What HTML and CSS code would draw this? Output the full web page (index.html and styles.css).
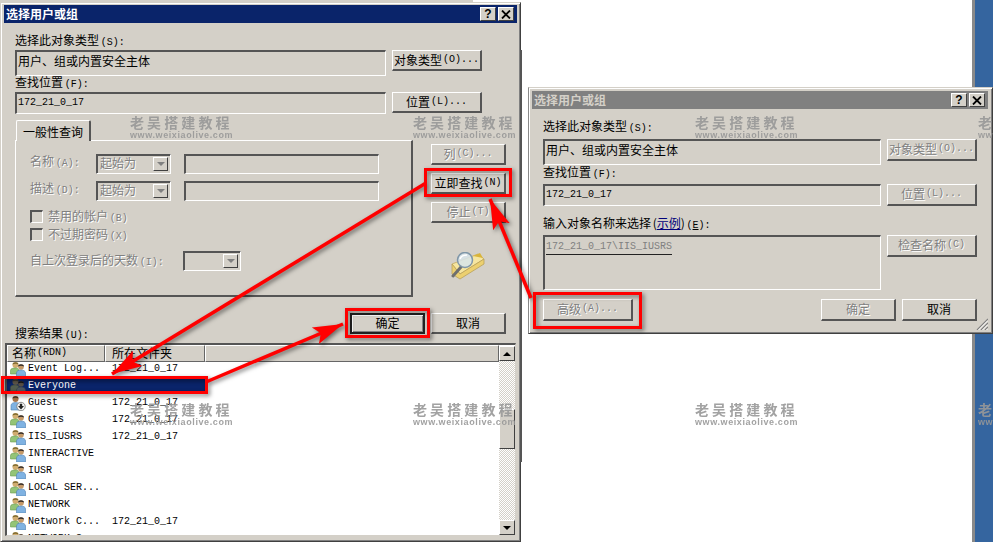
FILE: index.html
```html
<!DOCTYPE html>
<html lang="zh-CN">
<head>
  <meta charset="utf-8">
  <title>选择用户或组</title>
  <link rel="stylesheet" href="styles.css">
</head>
<body>

<svg class="defs" width="0" height="0">
  <symbol id="ico-group" viewBox="0 0 16 16">
    <circle cx="5.500" cy="4" r="3" fill="#d2ad70"/>
    <path d="M2.500 3.500C2.500 .5 8.500 .5 8.500 3.500 6.500 2.500 4.500 2.500 2.500 3.500Z" fill="#7d6a30"/>
    <path d="M0.500 13V9.500C0.500 7.500 3 7 5.500 7S9 8 9 10V13Z" fill="#93c477" stroke="#6a9a50" stroke-width=".6"/>
    <circle cx="11" cy="6" r="2.800" fill="#c69a68"/>
    <path d="M8 5.500C8 2.500 14 2.500 14 5.500 12 4.500 10 4.500 8 5.500Z" fill="#2f2a28"/>
    <path d="M6.500 16V12C6.500 10 8.500 9 11 9S15.500 10 15.500 12V16Z" fill="#7fb2e2" stroke="#4f7fb0" stroke-width=".6"/>
  </symbol>
  <symbol id="ico-guest" viewBox="0 0 16 16">
    <circle cx="5.500" cy="4" r="3" fill="#a8764a"/>
    <path d="M2.500 3.500C2.500 .5 8.500 .5 8.500 3.500 6.500 2.500 4.500 2.500 2.500 3.500Z" fill="#4a3320"/>
    <path d="M1 15V10.500C1 8.500 3 7.500 5.500 7.500S10 8.500 10 10.500V15Z" fill="#7fb2e2" stroke="#4f7fb0" stroke-width=".6"/>
    <circle cx="11" cy="11.500" r="4.200" fill="#f4f4f4" stroke="#777" stroke-width=".8"/>
    <path d="M9.800 8.800H12.200V11H14L11 14.500 8 11H9.800Z" fill="#222"/>
  </symbol>
</svg>

<div class="desktop">
  <div class="behind-strip"></div>
  <div class="blue-side"></div>

  <!-- search dialog -->
  <div class="win win-search">
    <div class="titlebar">
      <span>选择用户或组</span>
      <div class="title-btns">
        <div class="title-btn">?</div>
        <div class="title-btn"><svg width="10" height="9" viewBox="0 0 10 9"><path d="M1 0.500L9 8.500M9 0.500L1 8.500" stroke="#000" stroke-width="1.800"/></svg></div>
      </div>
    </div>
    <div class="body">
      <div class="lbl">选择此对象类型 <span class="key">(S):</span></div>
      <div class="pick-row">
        <div class="field">用户、组或内置安全主体</div>
        <div class="btn">对象类型 <span class="key">(O)...</span></div>
      </div>
      <div class="lbl lbl-next">查找位置 <span class="key">(F):</span></div>
      <div class="pick-row">
        <div class="field mono">172_21_0_17</div>
        <div class="btn">位置 <span class="key">(L)...</span></div>
      </div>

      <div class="query">
        <div class="tabs">
          <div class="tab">一般性查询</div>
          <div class="panel">
            <div class="q-row">
              <div class="q-label off">名称 <span class="key">(A):</span></div>
              <div class="combo"><span class="off">起始为</span><div class="combo-arrow"><i class="tri-down grey"></i></div></div>
              <div class="field q-input"></div>
            </div>
            <div class="q-row">
              <div class="q-label off">描述 <span class="key">(D):</span></div>
              <div class="combo"><span class="off">起始为</span><div class="combo-arrow"><i class="tri-down grey"></i></div></div>
              <div class="field q-input"></div>
            </div>
            <div class="checks">
              <div class="check off"><i class="box"></i><div>禁用的帐户 <span class="key">(B)</span></div></div>
              <div class="check off"><i class="box"></i><div>不过期密码 <span class="key">(X)</span></div></div>
            </div>
            <div class="days off">
              <div class="days-label">自上次登录后的天数 <span class="key">(I):</span></div>
              <div class="combo combo-small"><div class="combo-arrow"><i class="tri-down grey"></i></div></div>
            </div>
          </div>
        </div>
        <div class="side">
          <div class="btn off">列 <span class="key">(C)...</span></div>
          <div class="btn">立即查找 <span class="key">(N)</span></div>
          <div class="btn off">停止 <span class="key">(T)</span></div>
          <svg class="finder" width="34" height="28" viewBox="0 0 34 28">
            <path d="M1 12L27 2 33 7 9 22Z" fill="#f6e6a0" stroke="#c4ac62" stroke-width=".8"/>
            <path d="M1 12L9 22 33 7V12L9 27 1 22Z" fill="#ecd070" stroke="#b9a15a" stroke-width=".8"/>
            <path d="M22 4L29 1 32 6Z" fill="#d9b43a"/>
            <path d="M10 15L2 24" stroke="#6f6f6f" stroke-width="3" stroke-linecap="round"/>
            <circle cx="14" cy="8" r="7.500" fill="#d7e4ea" fill-opacity=".85" stroke="#7f96a8" stroke-width="1.500"/>
            <path d="M9 7C10 4 13 3 16 3" stroke="#fff" stroke-width="1.500" fill="none"/>
          </svg>
        </div>
      </div>

      <div class="foot">
        <div class="lbl foot-label">搜索结果 <span class="key">(U):</span></div>
        <div class="foot-btns">
          <div class="btn btn-default">确定</div>
          <div class="btn">取消</div>
        </div>
      </div>

      <div class="list">
        <div class="list-main">
          <div class="list-head">
            <div class="head-cell head-name">名称 <span class="key">(RDN)</span></div>
            <div class="head-cell head-folder">所在文件夹</div>
            <div class="head-cell head-rest"></div>
          </div>
          <div class="list-rows">
            <div class="row"><div class="cell-name"><svg class="ico"><use href="#ico-group"/></svg>Event Log...</div><div class="cell-folder">172_21_0_17</div></div>
            <div class="row row-sel"><div class="cell-name"><svg class="ico"><use href="#ico-group"/></svg>Everyone</div><div class="cell-folder"></div></div>
            <div class="row"><div class="cell-name"><svg class="ico"><use href="#ico-guest"/></svg>Guest</div><div class="cell-folder">172_21_0_17</div></div>
            <div class="row"><div class="cell-name"><svg class="ico"><use href="#ico-group"/></svg>Guests</div><div class="cell-folder">172_21_0_17</div></div>
            <div class="row"><div class="cell-name"><svg class="ico"><use href="#ico-group"/></svg>IIS_IUSRS</div><div class="cell-folder">172_21_0_17</div></div>
            <div class="row"><div class="cell-name"><svg class="ico"><use href="#ico-group"/></svg>INTERACTIVE</div><div class="cell-folder"></div></div>
            <div class="row"><div class="cell-name"><svg class="ico"><use href="#ico-group"/></svg>IUSR</div><div class="cell-folder"></div></div>
            <div class="row"><div class="cell-name"><svg class="ico"><use href="#ico-group"/></svg>LOCAL SER...</div><div class="cell-folder"></div></div>
            <div class="row"><div class="cell-name"><svg class="ico"><use href="#ico-group"/></svg>NETWORK</div><div class="cell-folder"></div></div>
            <div class="row"><div class="cell-name"><svg class="ico"><use href="#ico-group"/></svg>Network C...</div><div class="cell-folder">172_21_0_17</div></div>
            <div class="row"><div class="cell-name"><svg class="ico"><use href="#ico-group"/></svg>NETWORK S...</div><div class="cell-folder"></div></div>
          </div>
        </div>
        <div class="scroll">
          <div class="scroll-btn"><i class="tri-up"></i></div>
          <div class="scroll-track"><div class="scroll-thumb"></div></div>
          <div class="scroll-btn"><i class="tri-down"></i></div>
        </div>
      </div>
    </div>
  </div>

  <!-- picker dialog -->
  <div class="win win-pick">
    <div class="titlebar titlebar-off">
      <span>选择用户或组</span>
      <div class="title-btns">
        <div class="title-btn">?</div>
        <div class="title-btn"><svg width="10" height="9" viewBox="0 0 10 9"><path d="M1 0.500L9 8.500M9 0.500L1 8.500" stroke="#000" stroke-width="1.800"/></svg></div>
      </div>
    </div>
    <div class="body">
      <div class="lbl">选择此对象类型 <span class="key">(S):</span></div>
      <div class="pick-row">
        <div class="field">用户、组或内置安全主体</div>
        <div class="btn off">对象类型 <span class="key">(O)...</span></div>
      </div>
      <div class="lbl lbl-next">查找位置 <span class="key">(F):</span></div>
      <div class="pick-row">
        <div class="field mono">172_21_0_17</div>
        <div class="btn off">位置 <span class="key">(L)...</span></div>
      </div>
      <div class="lbl lbl-names">输入对象名称来选择 (<a class="link" href="#">示例</a>) <span class="key">(<u>E</u>):</span></div>
      <div class="pick-row names-row">
        <div class="field names"><span class="name-entry">172_21_0_17\IIS_IUSRS</span></div>
        <div class="btn off">检查名称 <span class="key">(C)</span></div>
      </div>
      <div class="pick-foot">
        <div class="btn off btn-adv">高级 <span class="key">(A)...</span></div>
        <div class="foot-btns">
          <div class="btn off">确定</div>
          <div class="btn">取消</div>
        </div>
      </div>
    </div>
    <svg class="grip" width="12" height="12" viewBox="0 0 12 12">
      <path d="M12 1L1 12M12 5L5 12M12 9L9 12" stroke="#808080" stroke-width="1.200"/>
      <path d="M12 2.500L2.500 12M12 6.500L6.500 12M12 10.500L10.500 12" stroke="#fff"/>
    </svg>
  </div>
  <div class="behind-edge"></div>

  <!-- watermarks -->
  <div class="mark mark-top mark-a"><b>老吴搭建教程</b><small>www.weixiaolive.com</small></div>
  <div class="mark mark-top mark-b"><b>老吴搭建教程</b><small>www.weixiaolive.com</small></div>
  <div class="mark mark-top mark-c"><b>老吴搭建教程</b><small>www.weixiaolive.com</small></div>
  <div class="mark mark-top mark-d"><b>老吴搭建教程</b><small>www.weixiaolive.com</small></div>
  <div class="mark mark-low mark-a"><b>老吴搭建教程</b><small>www.weixiaolive.com</small></div>
  <div class="mark mark-low mark-b"><b>老吴搭建教程</b><small>www.weixiaolive.com</small></div>
  <div class="mark mark-low mark-c"><b>老吴搭建教程</b><small>www.weixiaolive.com</small></div>
  <div class="mark mark-low mark-d"><b>老吴搭建教程</b><small>www.weixiaolive.com</small></div>

  <!-- red annotations -->
  <div class="notes">
    <svg class="arrows" width="993" height="542" viewBox="0 0 993 542">
      <defs>
        <marker id="head" markerUnits="userSpaceOnUse" markerWidth="32" markerHeight="22" refX="30" refY="11" orient="auto">
          <path d="M0 2L30 11 0 20 6 11Z" fill="#f00"/>
        </marker>
      </defs>
      <path d="M426 183L112 374" stroke="#f00" stroke-width="3.500" fill="none" marker-end="url(#head)"/>
      <path d="M206 382L343 324" stroke="#f00" stroke-width="3.500" fill="none" marker-end="url(#head)"/>
      <path d="M531 298L490 199" stroke="#f00" stroke-width="3.500" fill="none" marker-end="url(#head)"/>
    </svg>
    <div class="red-box red-find"></div>
    <div class="red-box red-ok"></div>
    <div class="red-box red-row"></div>
    <div class="red-box red-adv"></div>
  </div>
</div>

</body>
</html>
```

FILE: styles.css
```css
* {
  box-sizing: border-box;
}
body {
  margin: 0;
  background: white;
  font-family: "Noto Sans CJK SC", "Liberation Sans", sans-serif;
  font-size: 12px;
  line-height: 17px;
  color: #000;
}
.defs {
  position: absolute;
}
.desktop {
  position: relative;
  width: 993px;
  height: 542px;
  overflow: hidden;
  background: white;
}
.behind-strip {
  position: absolute;
  left: 0;
  top: 0;
  width: 473px;
  height: 2px;
  background: #d4d0c8;
}
.blue-side {
  position: absolute;
  left: 972px;
  top: 0;
  width: 21px;
  height: 542px;
  background: #35659f;
  border-left: 3px solid #8a8a8a;
}
.behind-edge {
  position: absolute;
  left: 520px;
  top: 50px;
  width: 2px;
  height: 412px;
  background: #555;
}

/* windows */
.win {
  position: absolute;
  background: #d4d0c8;
  border: 1px solid #d4d0c8;
  border-right-color: #404040;
  border-bottom-color: #404040;
  box-shadow: inset 1px 1px 0 #fff, inset -1px -1px 0 #808080;
}
.win-search {
  left: 0;
  top: 2px;
  width: 521px;
  height: 540px;
  padding: 2px 3px 0 3px;
}
.win-pick {
  left: 528px;
  top: 87px;
  width: 465px;
  height: 247px;
  padding: 3px 4px 0 3px;
  border-left-color: #8a8a8a;
}
.titlebar {
  display: flex;
  justify-content: space-between;
  align-items: center;
  height: 18px;
  padding-left: 2px;
  background: #0a246a;
  color: white;
  font-weight: bold;
}
.titlebar span {
  margin-bottom: 2px;
}
.titlebar-off {
  background: #808080;
  color: #d4d0c8;
}
.title-btns {
  display: flex;
  gap: 2px;
  padding-right: 3px;
}
.title-btn {
  display: flex;
  align-items: center;
  justify-content: center;
  width: 16px;
  height: 14px;
  background: #d4d0c8;
  border: 1px solid;
  border-color: #fff #404040 #404040 #fff;
  color: #000;
  font-family: "Liberation Sans", sans-serif;
  font-size: 12px;
}
.body {
  padding: 10px 0 0 11px;
}

/* form bits */
.key {
  font-family: "Liberation Mono", monospace;
  font-size: 10px;
}
.off {
  color: #808080;
  text-shadow: 1px 1px 0 #fff;
}
.lbl {
  height: 17px;
  line-height: 13px;
  word-spacing: -1px;
}
.lbl-next {
  margin-top: 4px;
}
.pick-row {
  display: grid;
  grid-template-columns: 371px 90px;
  gap: 6px;
  height: 21px;
}
.field {
  display: flex;
  align-items: center;
  padding: 0 0 6px 1px;
  background: #d4d0c8;
  border-style: solid;
  border-width: 2px 1px 1px 2px;
  border-color: #555 #fff #fff #555;
}
.field.mono {
  padding-bottom: 2px;
  font-family: "Liberation Mono", monospace;
  font-size: 10px;
}
.btn {
  display: flex;
  align-items: center;
  justify-content: center;
  gap: 1px;
  height: 21px;
  padding-bottom: 2px;
  background: #d4d0c8;
  border-style: solid;
  border-width: 1px 2px 2px 1px;
  border-color: #fff #555 #555 #fff;
  white-space: nowrap;
}
.btn-default {
  border: 2px solid #222;
  box-shadow: inset 1px 1px 0 #fff, inset -1px -1px 0 #808080;
}

/* query tab */
.query {
  display: grid;
  grid-template-columns: 398px 75px;
  gap: 18px;
  margin-top: 7px;
}
.tab {
  position: relative;
  display: flex;
  align-items: center;
  justify-content: center;
  width: 75px;
  height: 21px;
  margin-left: 1px;
  margin-bottom: -1px;
  background: #d4d0c8;
  border-style: solid;
  border-width: 1px 2px 0 1px;
  border-color: #fff #555 #d4d0c8 #fff;
  border-radius: 2px 2px 0 0;
  z-index: 1;
}
.panel {
  height: 157px;
  padding: 13px 0 0 14px;
  border-style: solid;
  border-width: 1px 2px 2px 1px;
  border-color: #fff #555 #555 #fff;
}
.q-row {
  display: grid;
  grid-template-columns: 66px 75px 208px;
  width: 349px;
  height: 20px;
  margin-bottom: 7px;
  align-items: center;
}
.q-label {
  margin-bottom: 4px;
  line-height: 13px;
  word-spacing: -1px;
}
.q-input {
  height: 20px;
  margin-left: 13px;
}
.combo {
  display: flex;
  justify-content: space-between;
  align-items: center;
  width: 75px;
  height: 20px;
  padding: 2px 2px 2px 3px;
  border: 1px solid;
  border-color: #555 #fff #fff #555;
  box-shadow: inset 1px 1px 0 #555;
}
.combo span {
  margin-bottom: 3px;
  line-height: 13px;
}
.combo-small {
  width: 58px;
  justify-content: flex-end;
}
.combo-arrow {
  display: flex;
  align-items: center;
  justify-content: center;
  width: 15px;
  height: 14px;
  background: #d4d0c8;
  border: 1px solid;
  border-color: #fff #404040 #404040 #fff;
}
.tri-down, .tri-up {
  display: block;
  width: 0;
  height: 0;
  border-left: 4px solid transparent;
  border-right: 4px solid transparent;
}
.tri-down {
  border-top: 4px solid #000;
}
.tri-up {
  border-bottom: 4px solid #000;
}
.tri-down.grey {
  border-top-color: #808080;
}
.checks {
  display: flex;
  flex-direction: column;
  gap: 1px;
  margin-top: 5px;
}
.check {
  display: flex;
  align-items: center;
  gap: 5px;
  height: 17px;
  word-spacing: -1px;
}
.box {
  width: 13px;
  height: 13px;
  border-style: solid;
  border-width: 2px 1px 1px 2px;
  border-color: #555 #fff #fff #555;
}
.days {
  display: flex;
  align-items: center;
  height: 20px;
  margin-top: 8px;
  word-spacing: -1px;
}
.days-label {
  width: 153px;
}
.days .combo {
  text-shadow: none;
}
.side {
  display: flex;
  flex-direction: column;
  gap: 8px;
  padding-top: 24px;
}
.finder {
  margin: 21px 0 0 20px;
}

/* results */
.foot {
  display: flex;
  justify-content: space-between;
  width: 491px;
  height: 30px;
  margin-top: 16px;
}
.foot-label {
  align-self: flex-end;
}
.foot-btns {
  display: grid;
  grid-template-columns: 75px 75px;
  gap: 6px;
}
.list {
  display: flex;
  width: 511px;
  height: 193px;
  margin-left: -10px;
  background: white;
  border-style: solid;
  border-width: 2px 1px 1px 2px;
  border-color: #555 #d4d0c8 #d4d0c8 #555;
  overflow: hidden;
}
.list-main {
  flex: 1;
  min-width: 0;
}
.list-head {
  display: grid;
  grid-template-columns: 98px 100px 1fr;
  height: 15px;
}
.head-cell {
  display: flex;
  align-items: center;
  gap: 1px;
  padding: 0 0 2px 4px;
  background: #d4d0c8;
  border: 1px solid;
  border-color: #fff #666 #666 #fff;
  line-height: 13px;
}
.head-folder {
  padding-left: 6px;
}
.list-rows {
  height: 176px;
  overflow: hidden;
  font-family: "Liberation Mono", monospace;
  font-size: 10px;
}
.row {
  display: grid;
  grid-template-columns: 98px 100px;
  width: 198px;
  height: 17px;
  line-height: 17px;
}
.row-sel {
  background: #0a246a;
  color: white;
}
.row-sel .ico {
  filter: grayscale(.6) brightness(.5);
}
.cell-name {
  display: flex;
  align-items: center;
  gap: 2px;
  padding-left: 3px;
  white-space: nowrap;
}
.cell-folder {
  padding-left: 7px;
}
.ico {
  width: 16px;
  height: 16px;
  flex: none;
}
.scroll {
  display: flex;
  flex-direction: column;
  width: 16px;
  padding-top: 1px;
}
.scroll-btn {
  display: flex;
  align-items: center;
  justify-content: center;
  flex: none;
  height: 15px;
  background: #d4d0c8;
  border: 1px solid;
  border-color: #fff #404040 #404040 #fff;
}
.scroll-track {
  flex: 1;
  padding-top: 48px;
  background: repeating-conic-gradient(#d4d0c8 0 25%, #fff 0 50%) 0 0 / 2px 2px;
}
.scroll-thumb {
  height: 40px;
  background: #d4d0c8;
  border: 1px solid;
  border-color: #fff #404040 #404040 #fff;
}

/* picker dialog */
.win-pick .body {
  padding-top: 10px;
}
.win-pick .lbl {
  height: 20px;
}
.win-pick .lbl-next {
  height: 19px;
}
.win-pick .lbl-names {
  height: 19px;
  margin-top: 10px;
}
.win-pick .pick-row {
  grid-template-columns: 338px 90px;
  height: 22px;
}
.win-pick .btn {
  height: 22px;
}
.win-pick .names-row {
  height: 55px;
}
.field.names {
  align-items: flex-start;
  height: 55px;
  padding: 3px 0 0 1px;
  font-family: "Liberation Mono", monospace;
  font-size: 10px;
  line-height: 14px;
}
.name-entry {
  color: #808080;
  border-bottom: 1px solid #222;
}
.pick-foot {
  display: flex;
  justify-content: space-between;
  width: 434px;
  margin-top: 9px;
}
.btn-adv {
  width: 90px;
}
.link {
  color: #00007a;
}
.grip {
  position: absolute;
  right: 4px;
  bottom: 3px;
}

/* watermark */
.mark {
  position: absolute;
  width: 104px;
  color: #989898;
  opacity: .9;
  white-space: nowrap;
}
.mark b {
  display: block;
  height: 18px;
  font-size: 14px;
  line-height: 18px;
  letter-spacing: 3.100px;
  font-weight: bold;
}
.mark small {
  display: block;
  font-family: "Liberation Sans", sans-serif;
  font-size: 9px;
  line-height: 9px;
  font-weight: bold;
  letter-spacing: .6px;
}
.mark-top { top: 113px; }
.mark-low { top: 400px; }
.mark-a { left: 130px; }
.mark-b { left: 413px; }
.mark-c { left: 695px; }
.mark-d { left: 978px; }

/* red annotations */
.notes {
  position: absolute;
  left: 0;
  top: 0;
  width: 993px;
  height: 542px;
  filter: drop-shadow(2px 2px 2px rgba(0, 0, 0, .5));
}
.arrows {
  position: absolute;
  left: 0;
  top: 0;
}
.red-box {
  position: absolute;
  border: 3px solid #f00;
}
.red-find {
  left: 424px;
  top: 168px;
  width: 88px;
  height: 29px;
}
.red-ok {
  left: 345px;
  top: 308px;
  width: 85px;
  height: 30px;
}
.red-row {
  left: 1px;
  top: 376px;
  width: 207px;
  height: 18px;
}
.red-adv {
  left: 533px;
  top: 292px;
  width: 109px;
  height: 37px;
}
```
